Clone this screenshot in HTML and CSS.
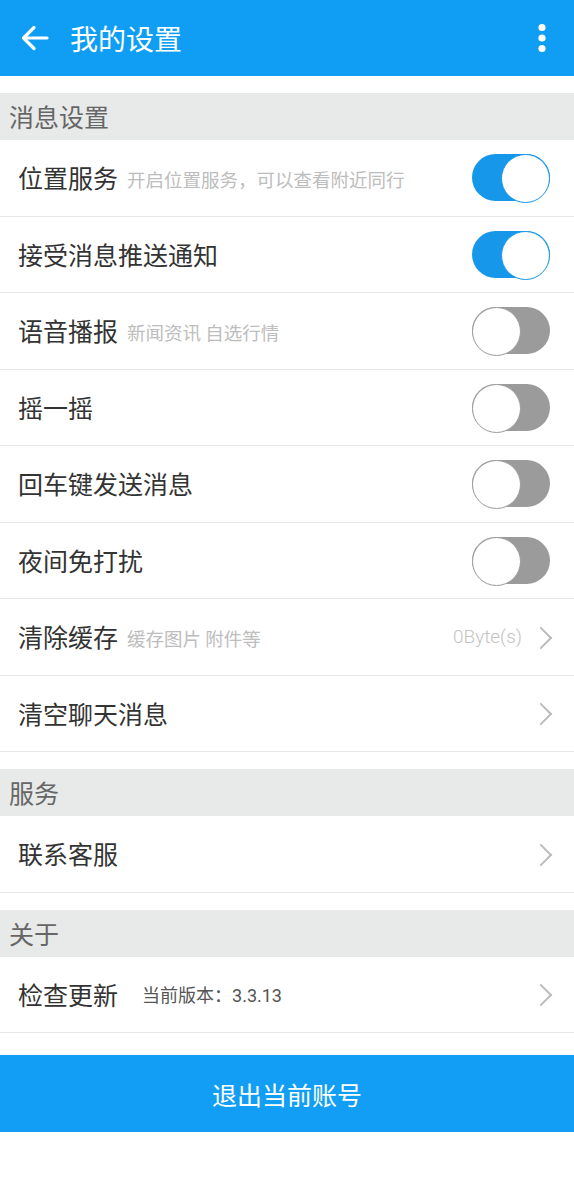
FILE: index.html
```html
<!DOCTYPE html>
<html lang="zh-CN">
<head>
<meta charset="utf-8">
<link rel="stylesheet" href="styles.css">
</head>
<body>
<header class="topbar">
  <svg class="back" width="28" height="26" viewBox="0 0 28 26"><path d="M26 13H3M13 2.5L2.5 13 13 23.5" fill="none" stroke="#fff" stroke-width="3.2" stroke-linecap="round" stroke-linejoin="round"/></svg>
  <h1 class="title">我的设置</h1>
  <svg class="more" width="10" height="30" viewBox="0 0 10 30"><circle cx="5" cy="4.5" r="3.6" fill="#fff"/><circle cx="5" cy="15" r="3.6" fill="#fff"/><circle cx="5" cy="25.5" r="3.6" fill="#fff"/></svg>
</header>

<section class="group first">
  <div class="group-title">消息设置</div>
  <div class="row"><span class="label">位置服务</span><span class="sub">开启位置服务，可以查看附近同行</span><span class="toggle on"></span></div>
  <div class="row"><span class="label">接受消息推送通知</span><span class="toggle on"></span></div>
  <div class="row"><span class="label">语音播报</span><span class="sub">新闻资讯 自选行情</span><span class="toggle"></span></div>
  <div class="row"><span class="label">摇一摇</span><span class="toggle"></span></div>
  <div class="row"><span class="label">回车键发送消息</span><span class="toggle"></span></div>
  <div class="row"><span class="label">夜间免打扰</span><span class="toggle"></span></div>
  <div class="row"><span class="label">清除缓存</span><span class="sub">缓存图片 附件等</span><span class="value">0Byte(s)</span><span class="chev"></span></div>
  <div class="row"><span class="label">清空聊天消息</span><span class="chev"></span></div>
</section>

<section class="group">
  <div class="group-title">服务</div>
  <div class="row"><span class="label">联系客服</span><span class="chev"></span></div>
</section>

<section class="group">
  <div class="group-title">关于</div>
  <div class="row"><span class="label">检查更新</span><span class="version">当前版本：3.3.13</span><span class="chev"></span></div>
</section>

<button class="logout">退出当前账号</button>
</body>
</html>
```
FILE: styles.css
```css
* { box-sizing: border-box; }
html, body { margin: 0; padding: 0; background: #fff; }
body {
  font-family: "Noto Sans CJK SC", "Noto Sans", Roboto, sans-serif;
  width: 574px;
}
.topbar {
  height: 76px;
  background: #0f9ef4;
  display: flex;
  align-items: center;
  padding: 0 0 0 21px;
}
.back { display: block; margin-right: 21px; }
.title {
  margin: 0;
  font-size: 28px;
  font-weight: 400;
  color: #fff;
  flex: 1;
  line-height: 1;
}
.more { display: block; margin-right: 27px; }

.group { margin-top: 17px; }
.group-title {
  height: 47px;
  background: #e8e9e9;
  color: #666;
  font-size: 25px;
  line-height: 47px;
  padding-left: 9px;
}
.row {
  height: 76.5px;
  border-bottom: 1px solid #e8e8e8;
  display: flex;
  align-items: center;
  padding: 0 24px 0 18px;
}
.label {
  font-size: 25px;
  color: #333;
  line-height: 1;
}
.sub {
  font-size: 18.5px;
  color: #bdbdbd;
  margin-left: 9px;
  line-height: 1;
  padding-top: 3px;
}
.version {
  font-family: Roboto, "Noto Sans CJK SC", sans-serif;
  font-size: 18px;
  color: #555;
  margin-left: 24px;
  line-height: 1;
  padding-top: 3px;
}
.value {
  margin-left: auto;
  font-family: Roboto, "Noto Sans", sans-serif;
  font-weight: 300;
  font-size: 19px;
  color: #c4c4c4;
  margin-right: 17px;
}
.chev {
  margin-left: auto;
  width: 14px;
  height: 22px;
  position: relative;
  margin-right: -3px;
}
.value + .chev { margin-left: 0; }
.chev::before {
  content: "";
  position: absolute;
  width: 14px;
  height: 14px;
  border-top: 2px solid #bcbcbc;
  border-right: 2px solid #bcbcbc;
  transform: rotate(45deg);
  left: -6px;
  top: 4px;
}
.toggle {
  margin-left: auto;
  width: 78px;
  height: 47px;
  border-radius: 24px;
  background: #9b9b9b;
  position: relative;
  margin-right: 0;
}
.toggle::after {
  content: "";
  position: absolute;
  top: 0;
  left: 0;
  width: 47px;
  height: 47px;
  border-radius: 50%;
  background: #fff;
  border: 1.5px solid #9b9b9b;
}
.toggle.on { background: #1697ea; }
.toggle.on::after { left: auto; right: 0; border-color: #1697ea; }

.logout {
  display: block;
  width: 100%;
  height: 77px;
  margin-top: 22px;
  border: 0;
  background: #119ef4;
  color: #fff;
  font-family: "Noto Sans CJK SC", sans-serif;
  font-size: 25px;
  padding: 0;
}
```
